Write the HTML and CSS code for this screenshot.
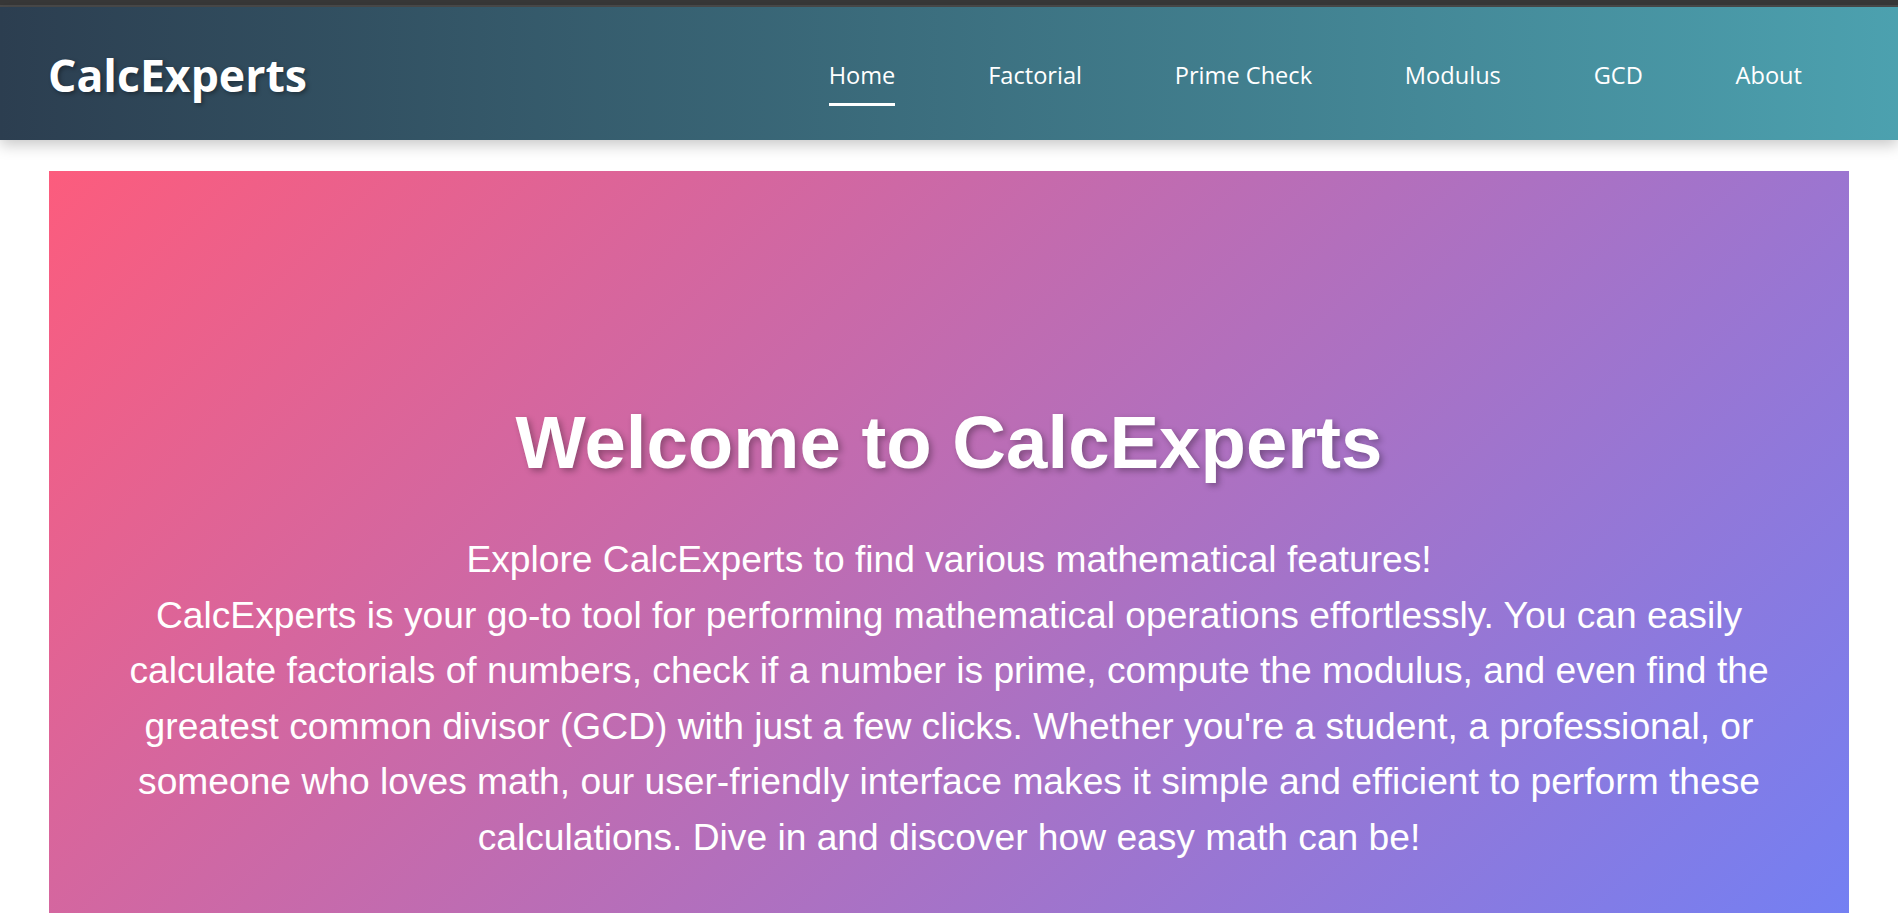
FILE: index.html
```html
<!DOCTYPE html>
<html lang="en">
<head>
<meta charset="utf-8">
<title>CalcExperts</title>
<link rel="stylesheet" href="styles.css">
</head>
<body>
<div class="topbar"></div>
<header class="site-header">
  <div class="logo">CalcExperts</div>
  <nav class="nav">
    <a class="nav-link active" href="#">Home</a>
    <a class="nav-link" href="#">Factorial</a>
    <a class="nav-link" href="#">Prime Check</a>
    <a class="nav-link" href="#">Modulus</a>
    <a class="nav-link" href="#">GCD</a>
    <a class="nav-link" href="#">About</a>
  </nav>
</header>
<main class="main">
  <section class="hero">
    <h1 class="hero-title">Welcome to CalcExperts</h1>
    <p class="hero-text">Explore CalcExperts to find various mathematical features!<br>CalcExperts is your go-to tool for performing mathematical operations effortlessly. You can easily calculate factorials of numbers, check if a number is prime, compute the modulus, and even find the greatest common divisor (GCD) with just a few clicks. Whether you're a student, a professional, or someone who loves math, our user-friendly interface makes it simple and efficient to perform these calculations. Dive in and discover how easy math can be!</p>
  </section>
</main>
</body>
</html>
```
FILE: styles.css
```css
* {
  box-sizing: border-box;
}

html, body {
  margin: 0;
  padding: 0;
  background: #ffffff;
}

body {
  font-family: "Liberation Sans", Arial, sans-serif;
}

.topbar {
  height: 7px;
  background: #383838;
  border-bottom: 2px solid #4a4a4a;
}

.site-header {
  height: 133px;
  display: flex;
  align-items: center;
  justify-content: space-between;
  padding: 0 48px;
  background: linear-gradient(to right, #2c3e50, #4ca1af);
  box-shadow: 0 5px 14px rgba(0, 0, 0, 0.22);
  position: relative;
  z-index: 1;
}

.logo {
  font-family: "Open Sans", "Noto Sans", sans-serif;
  font-weight: 700;
  font-size: 44.6px;
  color: #ffffff;
  text-shadow: 2px 2px 4px rgba(0, 0, 0, 0.35);
  margin-top: 2px;
}

.nav {
  display: flex;
  align-items: center;
}

.nav-link {
  position: relative;
  margin: 0 46.4px;
  font-family: "Open Sans", "Noto Sans", sans-serif;
  font-size: 23.6px;
  color: #ffffff;
  text-decoration: none;
  margin-top: 3px;
}

.nav-link:last-child {
  margin-right: 48px;
}

.nav-link.active::after {
  content: "";
  position: absolute;
  left: 0;
  right: 0;
  bottom: -15px;
  height: 3px;
  background: #ffffff;
}

.main {
  padding: 31px 0 0;
}

.hero {
  max-width: 1800px;
  margin: 0 auto;
  padding: 229px 64px 230px;
  background: linear-gradient(135deg, #fc5c7d, #6a82fb);
  color: #ffffff;
  text-align: center;
}

.hero-title {
  margin: 0 0 47px;
  font-family: "Liberation Sans", Arial, sans-serif;
  font-weight: 700;
  font-size: 74.4px;
  line-height: 85px;
  text-shadow: 3px 3px 6px rgba(0, 0, 0, 0.3);
}

.hero-text {
  margin: 0;
  font-family: "Liberation Sans", Arial, sans-serif;
  font-size: 37.2px;
  line-height: 55.5px;
}
```
